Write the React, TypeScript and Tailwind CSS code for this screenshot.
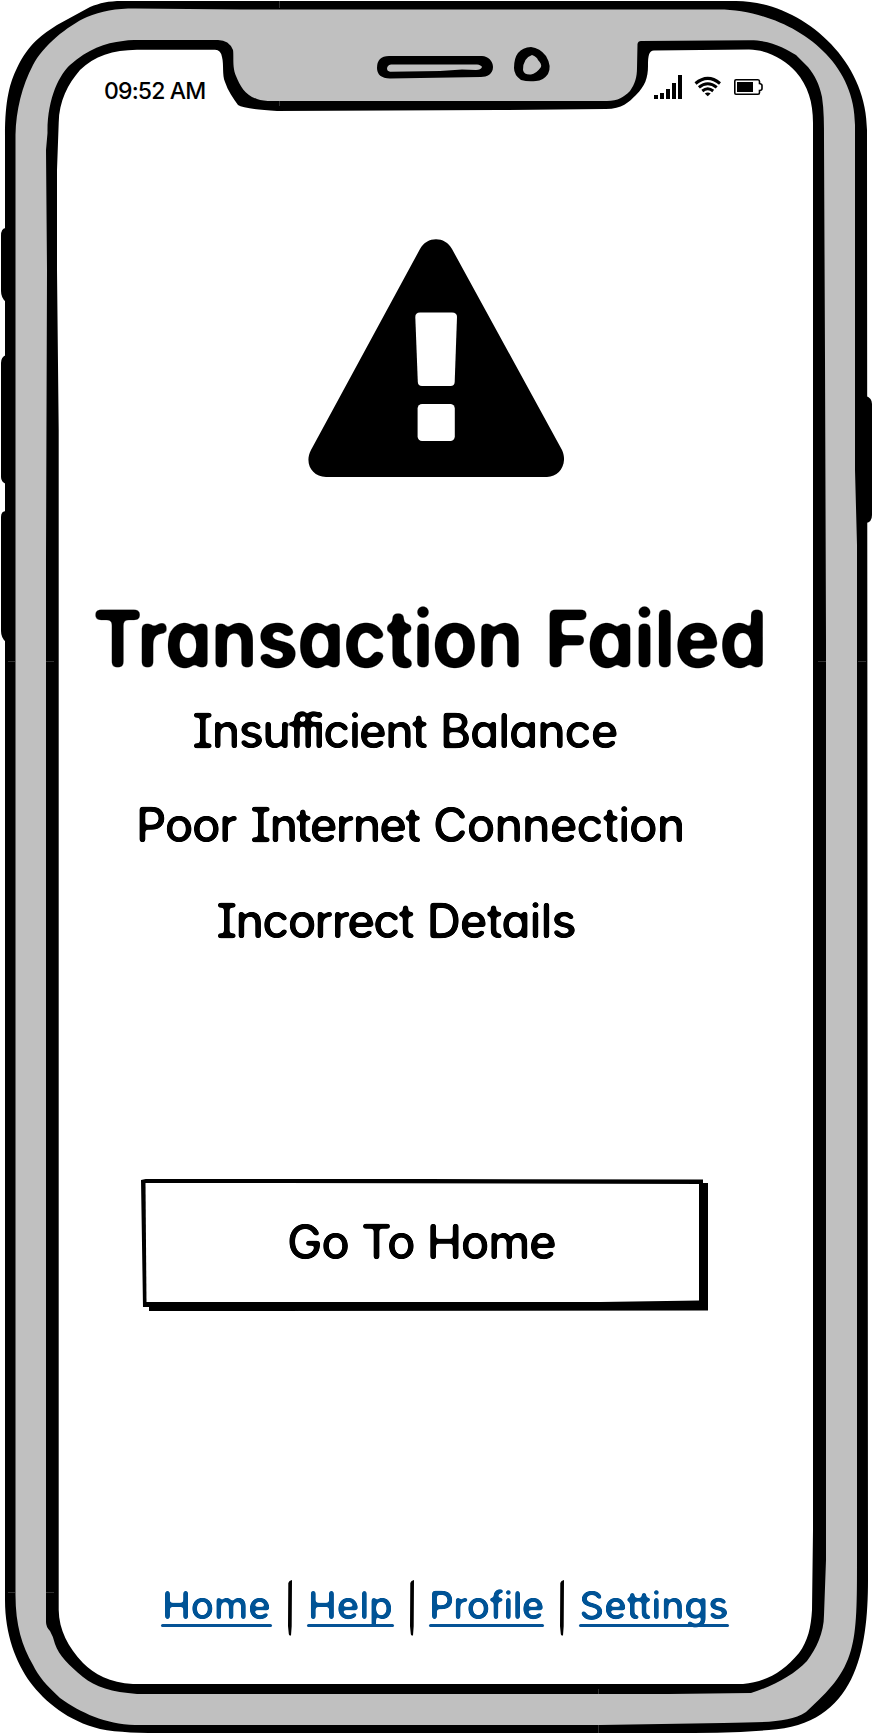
import React from "react";

const FONT = "font-['Inter','Liberation_Sans',sans-serif] [font-feature-settings:'cv11','cv08'] whitespace-nowrap";
const BODY = `${FONT} text-[47.5px] leading-[60px] font-medium [word-spacing:1px] [filter:url(#round-md)]`;

function RoundingFilters() {
  return (
    <svg className="absolute h-0 w-0" aria-hidden="true">
      <filter id="round-lg" x="-5%" y="-20%" width="110%" height="140%">
        <feGaussianBlur stdDeviation="2.4" />
        <feComponentTransfer>
          <feFuncA type="linear" slope="6" intercept="-2.2" />
        </feComponentTransfer>
      </filter>
      <filter id="round-md" x="-5%" y="-20%" width="110%" height="140%">
        <feGaussianBlur stdDeviation="1.5" />
        <feComponentTransfer>
          <feFuncA type="linear" slope="5" intercept="-1.7" />
        </feComponentTransfer>
      </filter>
    </svg>
  );
}

function PhoneFrame() {
  return (
    <svg className="absolute inset-0" width="872" height="1734" viewBox="0 0 872 1734" aria-hidden="true">
      <path d="M6 228 Q1 228 1 236 V291 Q1 298 6 302Z M6 355 Q1 357 1 363 V477 Q1 482 6 484Z M6 511 Q1 511 1 517 V631 Q1 638 6 642Z M866 396 Q872 398 872 404 V515 Q872 522 866 523Z" />
      <path d="M5 135 C5 100 10 82 17 68 C29 43 43 34 57 25 L90 7 C100 3 108 1 122 1 H736 C800 1 867 58 867 130 L868 1580 C868 1650 856 1725 769 1730 C720 1734 670 1733 620 1733 H200 C160 1733 125 1734 100 1729 C68 1721 45 1702 30 1682 C16 1662 5 1635 5 1600 Z" />
      <path fill="#c0c0c0" d="M15.5 135 C16 110 22 86 33 65 C43 46 67 26 87 17 C101 11 116 8.5 135 8.5 L240 9.5 H719 C778 9.5 855 50 855 125 V470 L857 545 V1560 C857 1600 857 1630 851 1650 C844 1675 830 1690 806 1712 C789 1723 765 1722 723 1723 L600 1725 H135 C105 1724 81 1713 60 1698 C47 1686 38 1676 33 1665 C22 1646 15.5 1625 15.5 1595 Z" />
      <path d="M46 150 L47.5 133 C47 98 60 74 70 65 C88 49 105 43 123 41 Q128 40 134 40 H218 Q229 40 233 50 C234 56 232 67 236 76 C240 86 245 95 257 99 Q263 101 272 101 H607 C618 101 624 97 630 91 C635 84 637 77 637 68 L637.5 44 Q638 41 641 41 L749 40.3 C771 40 786 49 796 55 L808 67 C815 76 819 83 822 97 C824 110 824 125 824 140 L825 360 L826 640 V1560 L824 1615 C824 1633 816 1649 807 1661 C794 1675 773 1686 751 1693 L669 1694 H137 C112 1692 95 1687 83 1677 C69 1665 59 1656 55 1644 Q53 1636 50 1631 Q46 1627 46 1622 V560 L47 270 Z" />
      <path fill="#ffffff" d="M58.7 123 C59 101 68 84 80 70 C94 56 113 50 137 49.7 H215 Q221 50 222 57 C224 65 222 75 225 82 C228 91 233 98 238 105 Q244 109 277 111 L500 110 L606 109 C622 109 629 102 636 95 C645 86 648 78 648 66 C648 55 649 51 654 50.5 L749 49.5 C769 50 785 60 796 72 C808 86 813 102 813 123 V1530 L812 1610 C811 1627 808 1641 799 1653 C783 1672 766 1682 743 1684 H133 C110 1683 94 1674 83 1663 C68 1647 59 1630 58.7 1610 V430 L57 270 V170 Z" />
      <path d="M389 56 H482 C488 56 493 61 493 67 C493 74 487 77 481 77 L390 78.5 Q377 78 377 68 Q377 56 389 56Z" />
      <path fill="#c0c0c0" d="M391 64.5 H477 Q481 65 482 67 Q481 70 476 70 L462 69.5 L440 71 L390 71.7 Q387 71 387 69 Q387 65 391 64.5Z" />
      <path d="M531 47 Q540 48 546 56 Q552 66 548 74 Q543 81 536 81 Q528 82 521 80 Q514 75 514 68 Q514 48 531 47Z" />
      <path fill="#c0c0c0" d="M532 55 Q537 57 538 60 Q542 64 541 67 Q536 74 531 74.5 Q524 75 523 70 Q523 58 532 55Z" />
      <path stroke="#444" strokeWidth="0.7" d="M279.5 1V8M279.5 101V106M8 661.5H15M46 661.5H54M818 661.5H826M858 661.5H866M8 1592.5H15M46 1592.5H54M598.5 1689V1694M598.5 1725V1733" />
    </svg>
  );
}

function StatusIcons() {
  return (
    <svg width="110" height="26" viewBox="654 74 110 26" aria-hidden="true">
      <path d="M654 95h4v4h-4zM660 93h4v6h-4zM666 89h4v10h-4zM672 83h4v16h-4zM678 75h4v24h-4z" />
      <g fill="none" stroke="#000" strokeWidth="3">
        <path d="M695.5 83.5 Q707.7 73.3 720 83.5" />
        <path d="M698.9 87.4 Q707.7 80 716.7 87.4" />
        <path d="M702.3 91 Q707.7 86.6 713.2 91" />
      </g>
      <path d="M704.8 93.5 Q707.7 91.3 710.7 93.5 L707.7 96.3Z" />
      <path fill="none" stroke="#000" strokeWidth="1.6" d="M736 79.8H758Q759.5 79.8 759.5 81.5V83.5Q762 84 762 85.5V88.5Q762 90.5 759.5 90.5V92.5Q759.5 94.2 758 94.2H736Q734.8 94.2 734.8 93V81Q734.8 79.8 736 79.8Z" />
      <path d="M737 82h16v10h-16z" />
    </svg>
  );
}

function WarningIcon() {
  return (
    <svg width="256" height="239" viewBox="308 239 256 239" aria-hidden="true">
      <path d="M420 249 C427 236 445 236 452 249 L562 450 C568 463 560 477 547 477 H326 C312 477 304 463 311 450Z" />
      <path fill="#fff" d="M420 312.5H452Q457 312.5 457 317L454.7 382Q454.5 386 450.5 386H422Q418 386 417.8 382L415.3 317Q415.3 312.5 420 312.5Z" />
      <rect x="417.6" y="404" width="37.2" height="37" rx="4.5" fill="#fff" />
    </svg>
  );
}

function Separator() {
  return (
    <svg className="mr-[15px] ml-4 shrink-0" width="4" height="56" viewBox="0 0 4 56" aria-hidden="true">
      <path d="M0.3 3Q1 0.5 4 0L3.7 46L3 55.5Q1 56 0.8 54L0 46Z" />
    </svg>
  );
}

function FooterLink({ label, className }: { label: string; className: string }) {
  return (
    <a href="#" className={`relative flex h-14 items-center justify-center pb-1.5 text-[#055396] ${className}`}>
      <span className={`${FONT} text-[38.5px] leading-[50px] font-medium [filter:url(#round-md)]`}>{label}</span>
      <span className="absolute inset-x-0 bottom-[9px] h-[3px] rounded-full bg-[#055396]" />
    </a>
  );
}

export default function App() {
  return (
    <main className="relative h-[1734px] w-[872px] overflow-hidden bg-white text-black">
      <RoundingFilters />
      <PhoneFrame />
      <div className="relative flex h-full flex-col">
        <header className="flex h-[110px] items-start justify-between pt-[74px] pr-[108px] pl-[104px]">
          <span className={`${FONT} pt-px text-[23px] leading-[33px] font-medium tracking-[-0.85px]`}>09:52 AM</span>
          <StatusIcons />
        </header>
        <div className="flex h-[368px] items-end pl-[308px]">
          <WarningIcon />
        </div>
        <h1 className={`${FONT} mt-[120px] pl-[93px] text-[79px] leading-[80px] font-bold [filter:url(#round-lg)]`}>
          <span className="mr-[-26px] inline-block origin-left scale-x-[0.935] tracking-[-0.6px]">Transaction</span>{" "}
          <span className="inline-block origin-left scale-x-[0.957] tracking-[-0.3px]">Failed</span>
        </h1>
        <p className={`${BODY} mt-[23px] pl-[192px]`}>
          <span className="tracking-[-1.8px]">
            Insu<span className="tracking-[-5px]">ff</span>icient
          </span>{" "}
          <span className="tracking-[-1.2px]">Balance</span>
        </p>
        <p className={`${BODY} mt-[34px] pl-[136px]`}>
          <span className="tracking-[-1.4px]">Poor</span> <span className="tracking-[-2px]">Internet</span>{" "}
          <span className="tracking-[-1px]">Connection</span>
        </p>
        <p className={`${BODY} mt-[36px] pl-[216px]`}>
          <span className="tracking-[-1.9px]">Incorrect</span> <span className="tracking-[-1.1px]">Details</span>
        </p>
        <button className="relative mt-[228px] ml-[141px] flex h-[132px] w-[568px] items-center pb-1.5 pl-[146px]">
          <svg className="absolute inset-0" width="568" height="132" viewBox="141 1179 568 132" aria-hidden="true">
            <path d="M141 1180 L148 1178.5 L703 1179.5V1183H708V1310.5L260 1311L149 1312V1307H143Z" />
            <path fill="#fff" d="M145.5 1183L280 1183L699 1184V1300.5L600 1302H146.5Z" />
          </svg>
          <span className={`${BODY} relative tracking-[-1.3px]`}>Go To Home</span>
        </button>
        <footer className="mt-[269px] flex items-center pl-[161px]">
          <FooterLink label="Home" className="w-[111px]" />
          <Separator />
          <FooterLink label="Help" className="w-[87px]" />
          <Separator />
          <FooterLink label="Profile" className="w-[115px] tracking-[-0.6px]" />
          <Separator />
          <FooterLink label="Settings" className="w-[150px] tracking-[-0.1px]" />
        </footer>
      </div>
    </main>
  );
}
